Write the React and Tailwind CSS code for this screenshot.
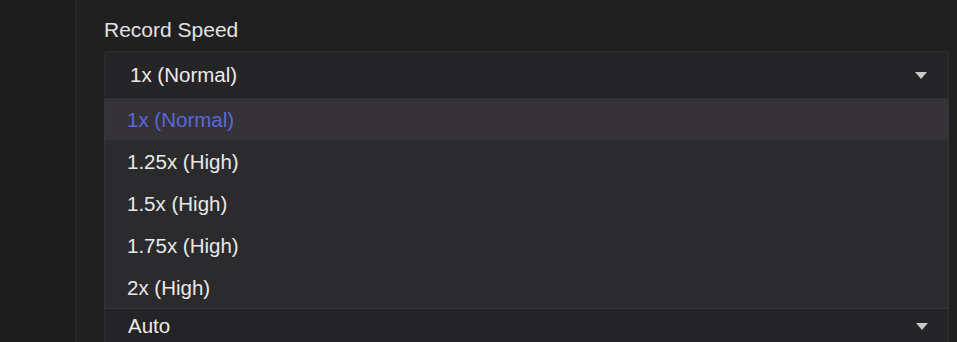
import React, { useState } from "react";

const speeds = ["1x (Normal)", "1.25x (High)", "1.5x (High)", "1.75x (High)", "2x (High)"];

const Caret = () => (
  <svg width="12" height="7" viewBox="0 0 12 7" className="text-[#c9c9cb]">
    <path d="M0 0h12L6 7z" fill="currentColor" />
  </svg>
);

export default function App() {
  const [speed, setSpeed] = useState(speeds[0]);
  const [open, setOpen] = useState(true);

  return (
    <div
      className="flex h-[342px] w-[957px] overflow-hidden bg-[#202020] text-[20.5px] text-[#e6e6e6]"
      style={{ fontFamily: '"Liberation Sans", Arial, sans-serif' }}
    >
      {/* Sidebar */}
      <div className="w-[76px] shrink-0 border-r border-[#2a2a2a] bg-[#1c1c1c]" />

      {/* Settings */}
      <div className="flex-1 pl-[28px] pr-[8px] pt-[18px]">
        <div className="relative z-10">
          <label className="mb-[9px] block text-[21px] leading-6 text-[#e2e2e2]">Record Speed</label>
          <div className="relative">
            <button
              onClick={() => setOpen(!open)}
              className="flex h-[46px] w-full items-center justify-between rounded-t border border-b-0 border-[#2f2e31] bg-[#252427] pl-[25px] pr-[21px] pt-[2px] text-left text-[#ebebeb]"
            >
              <span>{speed}</span>
              <Caret />
            </button>
            {open && (
              <div className="absolute left-0 right-0 top-[47px] border-x border-b border-[#363538] bg-[#2b2b2d]">
                {speeds.map((s) => (
                  <div
                    key={s}
                    onClick={() => {
                      setSpeed(s);
                      setOpen(false);
                    }}
                    className={
                      s === speed
                        ? "flex h-[42px] items-center bg-[#353337] pl-[22px] pt-[2px] text-[#5a68d8]"
                        : "flex h-[42px] items-center pl-[22px] pt-[2px] text-[#e8e8e8]"
                    }
                  >
                    {s}
                  </div>
                ))}
              </div>
            )}
          </div>
        </div>

        <div className="mt-[205px]">
          <div className="flex h-[46px] w-full items-center justify-between rounded-t border border-b-0 border-[#2f2e31] bg-[#242326] pl-[23px] pr-[20px] pt-[2px] text-[#ebebeb]">
            <span>Auto</span>
            <Caret />
          </div>
        </div>
      </div>
    </div>
  );
}
